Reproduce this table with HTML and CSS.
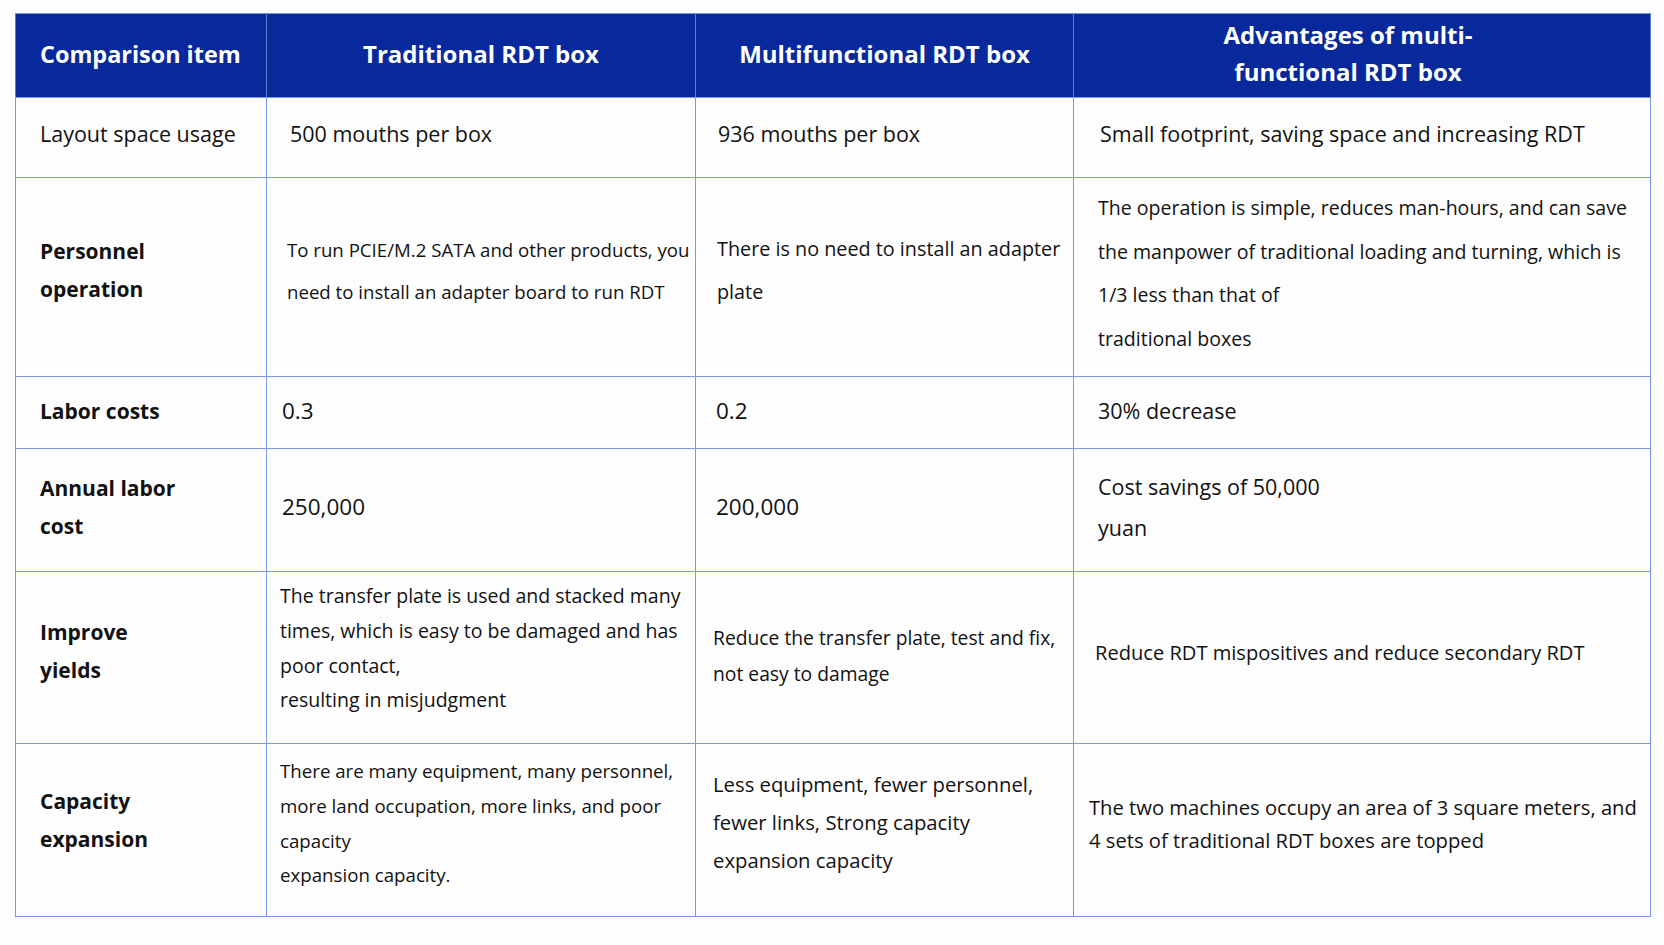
FILE: index.html
```html
<!DOCTYPE html>
<html lang="en">
<head>
<meta charset="utf-8">
<title>Comparison of RDT boxes</title>
<link rel="stylesheet" href="styles.css">
</head>
<body>
<table class="compare">
  <colgroup>
    <col class="c1">
    <col class="c2">
    <col class="c3">
    <col class="c4">
  </colgroup>
  <thead>
    <tr class="r-head">
      <th class="h-first">Comparison item</th>
      <th>Traditional RDT box</th>
      <th>Multifunctional RDT box</th>
      <th class="h-two">Advantages of multi-<br>functional RDT box</th>
    </tr>
  </thead>
  <tbody>
    <tr class="r1">
      <td class="label plain">Layout space usage</td>
      <td class="pl23">500 mouths per box</td>
      <td class="pl22">936 mouths per box</td>
      <td class="pl26">Small footprint, saving space and increasing RDT</td>
    </tr>
    <tr class="r2">
      <td class="label pb14">Personnel<br>operation</td>
      <td class="pl20 fs186 lh42 pb13">To run PCIE/M.2 SATA and other products, you<br>need to install an adapter board to run RDT</td>
      <td class="pl21 fs198 lh44 pb14">There is no need to install an adapter<br>plate</td>
      <td class="pl24 fs196 lh43 pb8">The operation is simple, reduces man-hours, and can save<br>the manpower of traditional loading and turning, which is<br>1/3 less than that of<br>traditional boxes</td>
    </tr>
    <tr class="r3">
      <td class="label">Labor costs</td>
      <td class="pl15 num">0.3</td>
      <td class="pl20 num">0.2</td>
      <td class="pl24">30% decrease</td>
    </tr>
    <tr class="r4">
      <td class="label">Annual labor<br>cost</td>
      <td class="pl15 num">250,000</td>
      <td class="pl20 num">200,000</td>
      <td class="pl24 lh41">Cost savings of 50,000<br>yuan</td>
    </tr>
    <tr class="r5">
      <td class="label">Improve<br>yields</td>
      <td class="pl13 fs195 lh35 pb18">The transfer plate is used and stacked many<br>times, which is easy to be damaged and has<br>poor contact,<br>resulting in misjudgment</td>
      <td class="pl18 fs193 lh37 pb4">Reduce the transfer plate, test and fix,<br>not easy to damage</td>
      <td class="pl21 fs201 pb9">Reduce RDT mispositives and reduce secondary RDT</td>
    </tr>
    <tr class="r6">
      <td class="label pb20">Capacity<br>expansion</td>
      <td class="pl13 fs187 lh35">There are many equipment, many personnel,<br>more land occupation, more links, and poor<br>capacity<br>expansion capacity.</td>
      <td class="pl18 fs203 lh38 pb17">Less equipment, fewer personnel,<br>fewer links, Strong capacity<br>expansion capacity</td>
      <td class="pl15 fs202 lh34">The two machines occupy an area of 3 square meters, and<br>4 sets of traditional RDT boxes are topped</td>
    </tr>
  </tbody>
</table>
</body>
</html>
```

FILE: styles.css
```css
html, body {
  margin: 0;
  padding: 0;
  background: #fdfdfd;
}

body {
  padding: 13px 0 0 15px;
  font-family: "Open Sans", "Liberation Sans", sans-serif;
  color: #121212;
}

.compare {
  border-collapse: collapse;
  table-layout: fixed;
  width: 1635px;
  border: 1px solid #7b98e6;
}

.c1 { width: 251px; }
.c2 { width: 429px; }
.c3 { width: 378px; }
.c4 { width: 577px; }

.compare th,
.compare td {
  border: 1px solid #7b98e6;
  padding: 0;
  vertical-align: middle;
  white-space: nowrap;
  overflow: hidden;
}

.r-head { height: 84px; }
.r1 { height: 80px; }
.r2 { height: 199px; }
.r3 { height: 72px; }
.r4 { height: 123px; }
.r5 { height: 172px; }
.r6 { height: 173px; }

.compare th {
  background: #07299b;
  color: #ffffff;
  font-size: 24px;
  font-weight: 700;
  text-align: center;
  border-color: #5f7cd0;
  border-top-color: #7b98e6;
  border-bottom-color: #7b98e6;
  padding-bottom: 4px;
}

.compare th.h-first {
  text-align: left;
  padding-left: 24px;
  font-size: 23.4px;
}

.compare th.h-two {
  line-height: 37.5px;
  padding-bottom: 5px;
  padding-right: 28px;
}

.compare td {
  font-size: 21.5px;
  line-height: 40px;
  text-align: left;
}

.r1 td { padding-bottom: 8px; }
.r2 td { padding-bottom: 10px; }
.r3 td { padding-bottom: 4px; }
.r4 td { padding-bottom: 6px; }
.r5 td { padding-bottom: 13px; }
.r6 td { padding-bottom: 13px; }

.compare td.label {
  font-size: 21px;
  font-weight: 700;
  padding-left: 24px;
  line-height: 38px;
}

.compare td.label.plain {
  font-size: 21.5px;
  font-weight: 400;
}

.compare td.num { font-size: 22.5px; }

.fs186 { font-size: 18.65px !important; }
.fs187 { font-size: 18.7px !important; }
.fs193 { font-size: 19.3px !important; }
.fs195 { font-size: 19.5px !important; }
.fs196 { font-size: 19.56px !important; }
.fs198 { font-size: 19.8px !important; }
.fs201 { font-size: 20.1px !important; }
.fs202 { font-size: 20.2px !important; }
.fs203 { font-size: 20.3px !important; }

.lh34 { line-height: 33px !important; }
.lh35 { line-height: 34.7px !important; }
.lh37 { line-height: 36px !important; }
.lh38 { line-height: 38px !important; }
.lh41 { line-height: 41px !important; }
.lh42 { line-height: 42px !important; }
.lh43 { line-height: 43.5px !important; }
.lh44 { line-height: 43px !important; }

.pb4 { padding-bottom: 4px !important; }
.pb8 { padding-bottom: 8px !important; }
.pb9 { padding-bottom: 9px !important; }
.pb13 { padding-bottom: 13px !important; }
.pb14 { padding-bottom: 14px !important; }
.pb17 { padding-bottom: 17px !important; }
.pb18 { padding-bottom: 18px !important; }
.pb20 { padding-bottom: 20px !important; }

.pl13 { padding-left: 13px !important; }
.pl15 { padding-left: 15px !important; }
.pl18 { padding-left: 17px !important; }
.pl20 { padding-left: 20px !important; }
.pl21 { padding-left: 21px !important; }
.pl22 { padding-left: 22px !important; }
.pl23 { padding-left: 23px !important; }
.pl24 { padding-left: 24px !important; }
.pl26 { padding-left: 26px !important; }
```
